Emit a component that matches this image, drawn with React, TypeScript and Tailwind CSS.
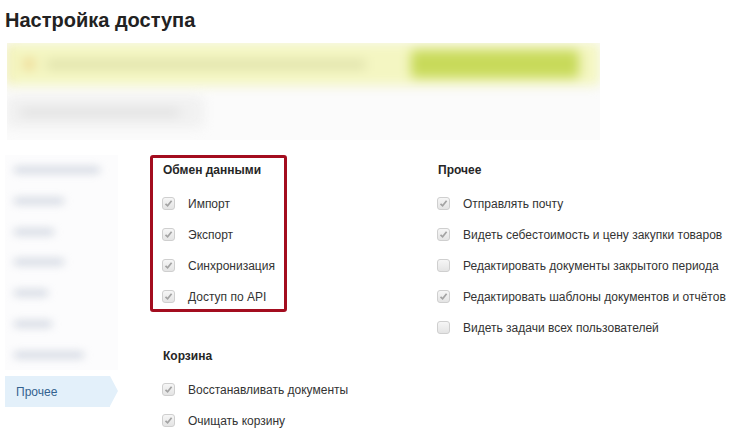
const font = { fontFamily: '"Liberation Sans", Arial, sans-serif' };

interface RowProps {
  label: string;
  checked: boolean;
}

function Box({ checked }: { checked: boolean }) {
  return (
    <span className="flex h-[13px] w-[13px] shrink-0 items-center justify-center rounded-[3px] border border-[#cfcfcf] bg-gradient-to-b from-[#f6f6f6] to-[#e4e4e4]">
      {checked && (
        <svg width="9" height="9" viewBox="0 0 9 9">
          <path d="M1.5 4.8 L3.6 6.8 L7.6 1.8" fill="none" stroke="#a3a3a3" strokeWidth="1.7" />
        </svg>
      )}
    </span>
  );
}

function Row({ label, checked }: RowProps) {
  return (
    <div className="flex h-[31px] items-center whitespace-nowrap">
      <Box checked={checked} />
      <span className="ml-[13px] text-[12px] text-[#333]">{label}</span>
    </div>
  );
}

function Header({ children }: { children: string }) {
  return <div className="ml-px h-4 text-[12px] font-bold leading-4 text-[#262626]">{children}</div>;
}

const SIDE_ITEMS = [86, 50, 40, 50, 34, 38, 70];

export default function App() {
  return (
    <div className="h-[447px] w-[737px] overflow-hidden bg-white" style={font}>
      <h1 className="ml-[5px] mt-[8px] text-[20px] font-bold leading-6 text-[#222]">Настройка доступа</h1>

      {/* blurred notice */}
      <div className="ml-[7px] mt-[11px] h-[97px] w-[593px] overflow-hidden bg-[#fbfbfb]">
        <div className="blur-[6px]">
          <div className="flex h-[42px] items-center rounded-[3px] border border-l-2 border-[#eef0a8] border-l-[#e0d25a] bg-[#f4f6c2]">
            <span className="ml-[15px] h-[10px] w-[10px] rounded-full bg-[#ecc97a]" />
            <span className="ml-[12px] h-[7px] w-[320px] rounded bg-[#d9dba4]" />
            <span className="ml-[45px] h-[28px] w-[168px] rounded-[4px] bg-[#c8da5a]" />
          </div>
          <div className="mt-[13px] flex h-[28px] w-[195px] items-center rounded-[3px] border border-[#dcdcdc] bg-[#f1f1f1]">
            <span className="ml-[12px] h-[7px] w-[160px] rounded bg-[#dedede]" />
          </div>
        </div>
      </div>

      <div className="ml-[5px] mt-[15px] flex">
        {/* sidebar */}
        <div className="w-[145px] shrink-0">
          <div className="w-[113px] overflow-hidden bg-[#fcfcfd]">
            <div className="flex h-[215px] flex-col justify-around blur-[4px]">
              {SIDE_ITEMS.map((w, i) => (
                <span key={i} className="ml-[9px] h-[6px] rounded bg-[#cdd3de]" style={{ width: w }} />
              ))}
            </div>
          </div>
          <div className="relative mt-[6px] flex h-[31px] w-[105px] items-center bg-[#e3f0fa] pl-[11px] text-[12px] text-[#33628f]">
            Прочее
            <span className="absolute -right-[8px] top-0 h-0 w-0 border-y-[15.5px] border-l-[8px] border-y-transparent border-l-[#e3f0fa]" />
          </div>
        </div>

        {/* column 1 */}
        <div className="w-[287px] shrink-0">
          <div className="h-[157px] w-[137px] rounded-[3px] border-[3px] border-[#a30d1f] pl-[9px] pt-[4px]">
            <Header>Обмен данными</Header>
            <div className="mt-[10px]">
              <Row label="Импорт" checked />
              <Row label="Экспорт" checked />
              <Row label="Синхронизация" checked />
              <Row label="Доступ по API" checked />
            </div>
          </div>
          <div className="mt-[36px] pl-[12px]">
            <Header>Корзина</Header>
            <div className="mt-[10px]">
              <Row label="Восстанавливать документы" checked />
              <Row label="Очищать корзину" checked />
            </div>
          </div>
        </div>

        {/* column 2 */}
        <div className="shrink-0 pt-[7px]">
          <Header>Прочее</Header>
          <div className="mt-[10px]">
            <Row label="Отправлять почту" checked />
            <Row label="Видеть себестоимость и цену закупки товаров" checked />
            <Row label="Редактировать документы закрытого периода" checked={false} />
            <Row label="Редактировать шаблоны документов и отчётов" checked />
            <Row label="Видеть задачи всех пользователей" checked={false} />
          </div>
        </div>
      </div>
    </div>
  );
}
